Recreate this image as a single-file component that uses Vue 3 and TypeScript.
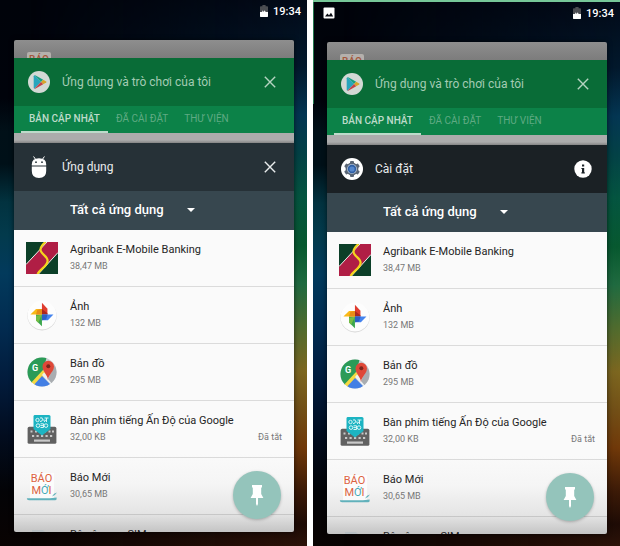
<script setup lang="ts">
import { ref } from 'vue'

type AppIcon = 'agribank' | 'photos' | 'maps' | 'keyboard' | 'baomoi' | 'sim'

interface AppEntry {
  name: string
  size: string
  icon: AppIcon
  status?: string
}

interface Phone {
  id: string
  title: string
  kind: 'apps' | 'settings'
  framed: boolean
}

const phones: Phone[] = [
  { id: 'left', title: 'Ứng dụng', kind: 'apps', framed: false },
  { id: 'right', title: 'Cài đặt', kind: 'settings', framed: true },
]

const tabs = ['BẢN CẬP NHẬT', 'ĐÃ CÀI ĐẶT', 'THƯ VIỆN']

const apps: AppEntry[] = [
  { name: 'Agribank E-Mobile Banking', size: '38,47 MB', icon: 'agribank' },
  { name: 'Ảnh', size: '132 MB', icon: 'photos' },
  { name: 'Bản đồ', size: '295 MB', icon: 'maps' },
  { name: 'Bàn phím tiếng Ấn Độ của Google', size: '32,00 KB', icon: 'keyboard', status: 'Đã tắt' },
  { name: 'Báo Mới', size: '30,65 MB', icon: 'baomoi' },
  { name: 'Bộ công cụ SIM', size: '', icon: 'sim' },
]

const activeTab = ref<Record<string, string>>({ left: tabs[0], right: tabs[0] })
</script>

<template>
  <main class="screens">
    <section v-for="phone in phones" :key="phone.id" class="phone" :class="{ framed: phone.framed }">
      <header class="status">
        <svg v-if="phone.framed" class="status-image" viewBox="0 0 12 12" aria-hidden="true">
          <rect x="0.5" y="0.5" width="11" height="11" rx="1" fill="#fff" />
          <path d="M2 9.5 4.4 6.4 6 8.2 8 5.8 10.2 9.5Z" fill="#0a0d14" />
        </svg>
        <svg class="battery" viewBox="0 0 8 12" aria-hidden="true">
          <path d="M2.4 0H5.6V1.2H7.2Q8 1.2 8 2V12H0V2Q0 1.2 .8 1.2H2.4Z" fill="#4b4d52" />
          <path d="M0 7H2L2.8 5.2 3.6 7 4.8 5.2 5.6 7H8V11.2Q8 12 7.2 12H.8Q0 12 0 11.2Z" fill="#fff" />
        </svg>
        <time>19:34</time>
      </header>

      <div class="stack">
        <div class="card-back">
          <svg class="back-icon" viewBox="0 0 24 24" aria-hidden="true">
            <rect width="24" height="24" rx="2" fill="#b4b0ac" />
            <text x="12" y="11" text-anchor="middle" class="back-logo">BÁO</text>
          </svg>
        </div>

        <article class="card-play">
          <header class="bar play-bar">
            <svg class="app-mark" viewBox="0 0 22 22" aria-hidden="true">
              <circle cx="11" cy="11" r="11" fill="#d3d9d5" />
              <path d="M6.4 4.2 13 11 6.4 17.8Q5.7 17.5 5.7 16.8V5.2Q5.7 4.5 6.4 4.2Z" fill="#27a5bd" />
              <path d="M6.4 4.2Q7 4 7.7 4.4L15.2 8.7 13 11Z" fill="#18a085" />
              <path d="M15.2 8.7 18.2 10.4Q19.1 11 18.2 11.6L15.2 13.3 13 11Z" fill="#d7a52a" />
              <path d="M6.4 17.8Q7 18 7.7 17.6L15.2 13.3 13 11Z" fill="#c24349" />
            </svg>
            <h2>Ứng dụng và trò chơi của tôi</h2>
            <button type="button" class="icon-button" aria-label="Đóng">
              <svg class="close" viewBox="0 0 12 12"><path d="M.8 .8 11.2 11.2M11.2 .8 .8 11.2" /></svg>
            </button>
          </header>
          <nav class="tabs">
            <button
              v-for="tab in tabs"
              :key="tab"
              type="button"
              :class="{ active: activeTab[phone.id] === tab }"
              @click="activeTab[phone.id] = tab"
            >
              {{ tab }}
            </button>
          </nav>
          <div class="sheet-edge"></div>
        </article>

        <article class="card-front">
          <header class="bar" :class="phone.kind">
            <svg v-if="phone.kind === 'apps'" class="app-mark" viewBox="0 0 22 22" aria-hidden="true">
              <path d="M5.8 .8 8 4M16.2 .8 14 4" stroke="#fff" stroke-width="1" stroke-linecap="round" />
              <path d="M3.8 9.6V8.5Q3.8 2.3 11 2.3T18.2 8.5V9.6Z" fill="#fff" />
              <circle cx="8" cy="6.2" r=".9" fill="#263238" />
              <circle cx="14" cy="6.2" r=".9" fill="#263238" />
              <path d="M3.8 10.6H18.2V15Q18.2 22 11 22T3.8 15Z" fill="#fff" />
            </svg>
            <svg v-else class="app-mark" viewBox="0 0 22 22" aria-hidden="true">
              <circle cx="11" cy="11" r="11" fill="#fff" />
              <g fill="#596575">
                <rect v-for="a in [0, 60, 120]" :key="a" x="9" y="3" width="4" height="16" rx="1" :transform="`rotate(${a} 11 11)`" />
                <circle cx="11" cy="11" r="6.4" />
              </g>
              <circle cx="11" cy="11" r="5" fill="#a9bad0" />
              <circle cx="11" cy="11" r="4.2" fill="#2f5fa5" />
              <circle cx="11" cy="11" r="2.6" fill="#5688cd" />
            </svg>
            <h2>{{ phone.title }}</h2>
            <button v-if="phone.kind === 'apps'" type="button" class="icon-button" aria-label="Đóng">
              <svg class="close" viewBox="0 0 12 12"><path d="M.8 .8 11.2 11.2M11.2 .8 .8 11.2" /></svg>
            </button>
            <button v-else type="button" class="icon-button" aria-label="Thông tin">
              <svg class="info" viewBox="0 0 18 18">
                <circle cx="9" cy="9" r="8.7" fill="#fff" />
                <path d="M8 4.6H10.2V6.6H8ZM7.4 7.9H10.2V12.3H10.8V13.4H7.4V12.3H8V9H7.4Z" fill="#1b2227" />
              </svg>
            </button>
          </header>

          <div class="filter">
            <div class="picker">
              <select aria-label="Lọc ứng dụng">
                <option>Tất cả ứng dụng</option>
              </select>
              <svg viewBox="0 0 8 4" aria-hidden="true"><path d="M0 0H8L4 4Z" fill="#fff" /></svg>
            </div>
          </div>

          <ul class="apps-list">
            <li v-for="app in apps" :key="app.name">
              <svg v-if="app.icon === 'agribank'" class="app-icon" viewBox="0 0 32 32" aria-hidden="true">
                <rect width="32" height="32" fill="#0c3f28" />
                <path d="M0 22.5 21 0H32V10.5L12.5 32H0Z" fill="#b01e45" />
                <path d="M0 22.5 21 0M12.5 32 32 10.5" fill="none" stroke="#eef1ec" stroke-width="1" />
                <path d="M19.5 0Q13 5.5 15 9.5C17 13.5 22.5 15 21.5 19.5C20.5 25 14 27 11.5 32" fill="none" stroke="#f4d51c" stroke-width="2.2" />
              </svg>
              <svg v-else-if="app.icon === 'photos'" class="app-icon" viewBox="0 0 32 32" aria-hidden="true">
                <circle cx="16" cy="16.8" r="14.6" fill="#d5d5d5" />
                <circle cx="16" cy="16" r="14.5" fill="#fdfdfd" />
                <g transform="translate(1.2 1) scale(.92)">
                  <path d="M16 3 22 9.5V15.8H16Z" fill="#df3c2f" />
                  <path d="M16 9.8V15.8H22V14.5Z" fill="#a9281f" />
                  <path d="M28.5 15.8 22.5 22H16V15.8Z" fill="#4483ee" />
                  <path d="M16 15.8H22.2L20.6 21.2 16 22Z" fill="#2c5fc5" />
                  <path d="M16 28.6 9.6 22.4V15.8H16Z" fill="#3ba64e" />
                  <path d="M16 15.8 9.6 17.5V22.4L12 24.7Z" fill="#75bd45" />
                  <path d="M3.5 15.8 9.6 9.8H16V15.8Z" fill="#f9b916" />
                  <path d="M9.6 15.8 11 10.5 16 9.8V15.8Z" fill="#e88d17" />
                </g>
              </svg>
              <svg v-else-if="app.icon === 'maps'" class="app-icon" viewBox="0 0 32 32" aria-hidden="true">
                <clipPath :id="`disc-${phone.id}`"><circle cx="16" cy="16" r="14.5" /></clipPath>
                <g :clip-path="`url(#disc-${phone.id})`">
                  <rect width="32" height="32" fill="#c9cdd1" />
                  <path d="M0 0H21L17 15 4 29H0Z" fill="#2b9b57" />
                  <path d="M3 29 17 14 20 18 8 32Z" fill="#f6da42" />
                  <path d="M16 20 28 32H5Z" fill="#437fe4" />
                  <path d="M16 19 18 16.5 32 30V32H28Z" fill="#edf0f2" />
                  <path d="M22 23 29 9 32 18V27L27 29Z" fill="#a9adb1" />
                </g>
                <path d="M22 24C21.5 18.5 16.5 15.5 16.5 10.5A5.7 5.7 0 0 1 28 10.5C28 15.5 22.5 18.5 22 24Z" fill="#df4838" />
                <circle cx="22.3" cy="10.2" r="2" fill="#7b241c" />
                <text x="9" y="14.5" text-anchor="middle" class="maps-g">G</text>
              </svg>
              <svg v-else-if="app.icon === 'keyboard'" class="app-icon" viewBox="0 0 32 32" aria-hidden="true">
                <rect x="1.6" y="13.8" width="28.8" height="17" rx="1.6" fill="#616161" />
                <g fill="#c9c9c9">
                  <rect v-for="x in [4.5, 9, 13.5, 18, 22.5, 26]" :key="x" :x="x" y="17.5" width="2" height="2" />
                  <rect v-for="x in [6, 10.5, 15, 19.5, 24]" :key="x" :x="x" y="22" width="2.2" height="2" />
                  <rect x="8" y="26.5" width="16" height="2.2" />
                </g>
                <path d="M8.5 2H23Q24.5 2 24.5 3.5V16L16 22.5 7.5 16V3.5Q7.5 2 8.5 2Z" fill="#1cb4c2" />
                <g fill="none" stroke="#d8f5f6" stroke-width="1">
                  <circle cx="11.5" cy="7" r="1.7" />
                  <path d="M14 5Q17 4 16.5 6.5T14 8.5M16.5 7H18.5M18.5 5H22.5M20.5 5V9M18.5 9Q18 7 20.5 7" />
                  <circle cx="12" cy="12.6" r="1.8" />
                  <circle cx="20" cy="12.6" r="1.8" />
                  <path d="M14.5 10.8H17.5V14.5H14.5M14.5 12.6H17.5" />
                </g>
              </svg>
              <svg v-else-if="app.icon === 'baomoi'" class="app-icon" viewBox="0 0 32 32" aria-hidden="true">
                <path d="M4 3H28V29H4Z" fill="#fff" opacity=".7" />
                <text x="15.5" y="12" text-anchor="middle" class="bao-logo">BÁO</text>
                <text x="15.5" y="24" text-anchor="middle" class="bao-logo">M<tspan fill="#45aab8">Ớ</tspan>I</text>
                <path d="M.8 28.2H24L30.6 27.6V29Q30.6 30.2 29 30.2H3Q.8 30.2 .8 28.2ZM26 26.4Q27.6 23.4 31 22.6 29.5 25.4 26 26.4Z" fill="#61b1bb" />
              </svg>
              <svg v-else class="app-icon" viewBox="0 0 32 32" aria-hidden="true">
                <path d="M6 3H17L23 9V30H6Z" fill="#b8bfc3" />
              </svg>
              <div class="label">
                <strong>{{ app.name }}</strong>
                <span v-if="app.size">{{ app.size }}</span>
              </div>
              <span v-if="app.status" class="state">{{ app.status }}</span>
            </li>
          </ul>

          <button type="button" class="pin" aria-label="Ghim màn hình">
            <svg viewBox="0 0 14 22" aria-hidden="true">
              <path d="M2 1H12V3.4H11.2V10L13.4 14H8V20L7 22 6 20V14H.6L2.8 10V3.4H2Z" fill="#fff" />
            </svg>
          </button>
        </article>
      </div>
    </section>
  </main>
</template>

<style>
body {
  margin: 0;
  background: #fff;
}
</style>

<style scoped>
.screens {
  display: grid;
  grid-template-columns: 1fr 1fr;
  gap: 6px;
  height: 100vh;
  font-family: Roboto, "Noto Sans", sans-serif;
}

.phone {
  position: relative;
  display: flex;
  flex-direction: column;
  min-height: 0;
  min-width: 0;
  box-sizing: border-box;
  padding: 0 13px 14px 14px;
  background: linear-gradient(#00030a, #00030b 18%, #011018 24%, #001018 30%, #02323f 37%, #033a4c 43%, #023a5c 50%, #022b50 60%, #021b3b 70%, #020c1e 80%, #030306 90%, #090302);
}

.phone::before {
  content: "";
  position: absolute;
  inset: 0;
  background: linear-gradient(#020a18, #02182c 12%, #033653 21%, #034247 28%, #045540 36%, #07592f 45%, #206b3f 52%, #516c2d 60%, #7d671f 68%, #735016 75%, #713909 82%, #3c1a07 90%, #1e0b05 96%, #2c1208);
  mask-image: linear-gradient(to right, transparent 10%, #000);
}

.phone.framed {
  padding-bottom: 12px;
  border-top: 2px solid #76c798;
}

.phone.framed::after {
  content: "";
  position: absolute;
  left: 0;
  top: 0;
  width: 1px;
  height: 102px;
  background: #23764d;
}

.status {
  position: relative;
  display: flex;
  align-items: center;
  justify-content: flex-end;
  gap: 5px;
  height: 22px;
  margin: 0 -7px 18px -4px;
  color: #fff;
}

.status time {
  font-size: 11px;
  font-weight: 500;
}

.status-image {
  width: 12px;
  height: 12px;
  margin-right: auto;
}

.battery {
  width: 8px;
  height: 12px;
}

.stack {
  position: relative;
  display: flex;
  flex: 1;
  flex-direction: column;
  min-height: 0;
  border-radius: 2px;
  overflow: hidden;
  box-shadow: 0 0 5px rgb(0 0 0 / 60%);
}

.card-back {
  display: flex;
  flex: none;
  height: 18px;
  box-sizing: border-box;
  padding: 12px 13px 0;
  overflow: hidden;
  background: linear-gradient(#8e8e8e, #7c7c7c);
}

.back-icon {
  flex: none;
  width: 24px;
  height: 24px;
}

.back-logo {
  font: 500 10px Roboto, sans-serif;
  fill: #a3573a;
}

.card-play {
  flex: none;
}

.bar {
  display: flex;
  align-items: center;
  gap: 12px;
  height: 48px;
  box-sizing: border-box;
  padding: 0 15px 0 14px;
  color: #e9eced;
}

.bar h2 {
  flex: 1;
  margin: 0;
  font-size: 12px;
  font-weight: 400;
  line-height: 16px;
}

.play-bar {
  background: #096c37;
  color: #a3cbb3;
}

.bar.apps {
  background: #263137;
}

.bar.settings {
  background: #1b2125;
}

.app-mark {
  width: 22px;
  height: 22px;
}

.icon-button {
  display: grid;
  place-items: center;
  width: 18px;
  height: 24px;
  padding: 0;
  border: 0;
  background: none;
}

.close {
  width: 12px;
  height: 12px;
  fill: none;
  stroke: #e9eced;
  stroke-width: 1.4;
}

.play-bar .close {
  stroke: #b5d3c1;
}

.info {
  width: 18px;
  height: 18px;
}

.tabs {
  display: flex;
  height: 27px;
  padding-left: 7px;
  background: #0c8248;
}

.tabs button {
  padding: 0 8px;
  border: 0;
  border-bottom: 2px solid transparent;
  background: none;
  color: #5faa83;
  font: 400 10px Roboto, sans-serif;
}

.tabs button.active {
  border-color: #bddbca;
  color: #bddbca;
  font-weight: 500;
}

.sheet-edge {
  height: 10px;
  background: linear-gradient(#acacac 70%, #858585);
}

.card-front {
  position: relative;
  display: flex;
  flex: 1;
  flex-direction: column;
  min-height: 0;
}

.card-front .bar {
  flex: none;
}

.filter {
  flex: none;
  display: flex;
  align-items: center;
  height: 39px;
  box-sizing: border-box;
  padding: 0 56px 2px;
  background: #37474f;
}

.picker {
  display: grid;
  align-items: center;
  width: 125px;
}

.picker select {
  grid-area: 1 / 1;
  width: 100%;
  padding: 0;
  border: 0;
  appearance: none;
  background: none;
  color: #fff;
  font: 500 13px/20px Roboto, sans-serif;
}

.picker svg {
  grid-area: 1 / 1;
  justify-self: end;
  width: 8px;
  height: 4px;
  pointer-events: none;
}

.apps-list {
  flex: 1;
  min-height: 0;
  margin: 0;
  padding: 0;
  overflow: hidden;
  list-style: none;
  background: linear-gradient(#fafafa 74%, #f5f5f5 84%, #e4e4e4 94%, #c4c4c4);
}

.apps-list li {
  display: flex;
  align-items: center;
  gap: 12px;
  height: 56px;
  padding: 0 12px;
}

.apps-list li + li {
  border-top: 1px solid rgb(0 0 0 / 12%);
}

.app-icon {
  flex: none;
  width: 32px;
  height: 32px;
}

.label {
  flex: 1;
  min-width: 0;
  min-height: 32px;
  white-space: nowrap;
}

.label strong,
.label span {
  display: block;
}

.label strong {
  color: #252525;
  font-size: 11px;
  font-weight: 400;
  line-height: 16px;
}

.label span,
.state {
  color: #777;
  font-size: 9px;
  line-height: 16px;
}

.state {
  align-self: flex-end;
  padding-bottom: 12px;
}

.maps-g {
  font: 700 9px Roboto, sans-serif;
  fill: #fff;
}

.bao-logo {
  font: 400 11px Roboto, sans-serif;
  fill: #dc6241;
}

.pin {
  position: absolute;
  right: 13px;
  bottom: 13px;
  display: grid;
  place-items: center;
  width: 48px;
  height: 48px;
  padding: 0;
  border: 0;
  border-radius: 50%;
  background: #94c4bb;
  box-shadow: 0 1px 3px rgb(0 0 0 / 25%);
}

.pin svg {
  width: 14px;
  height: 22px;
}
</style>
